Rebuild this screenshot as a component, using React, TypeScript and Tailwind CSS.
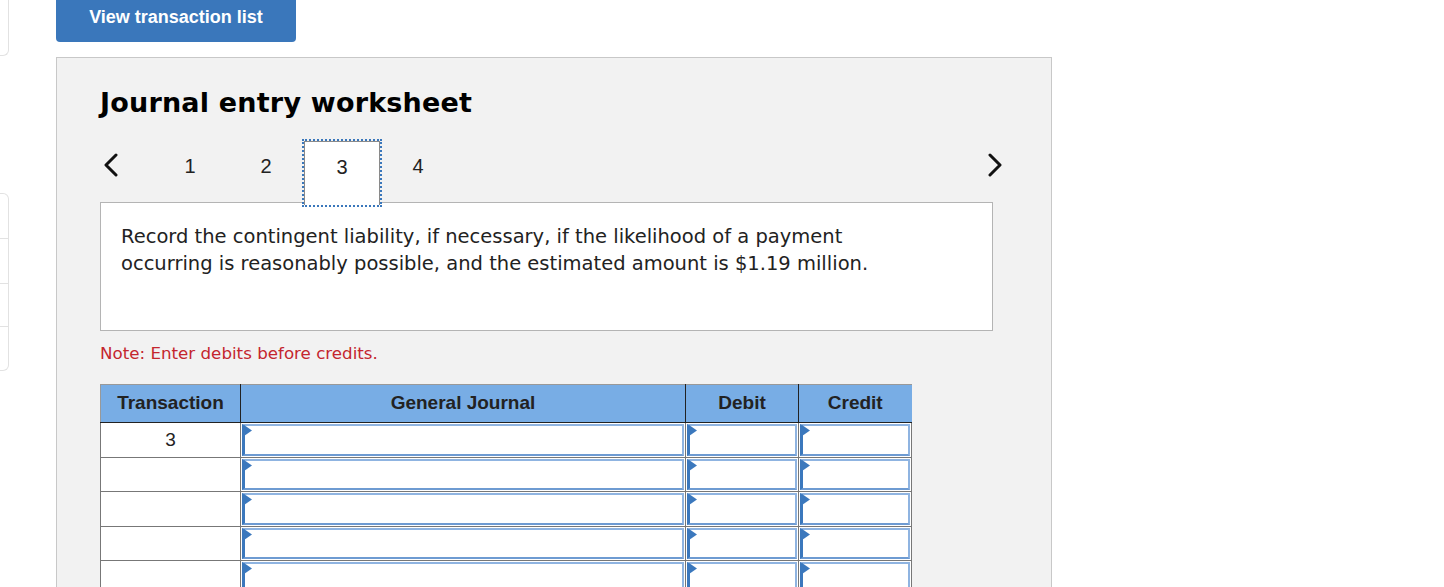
import React from "react";

const sans = { fontFamily: '"Liberation Sans", Arial, sans-serif' };
const verdana = { fontFamily: 'Verdana, "DejaVu Sans", sans-serif' };

function SideTabs() {
  return (
    <div className="w-[9px] shrink-0">
      <div className="h-[56px] border border-l-0 border-t-0 border-[#e2e2e2] rounded-br-[6px]" />
      <div className="mt-[137px] border border-l-0 border-[#e2e2e2] rounded-r-[6px]">
        <div className="h-[45px] border-b border-[#e2e2e2]" />
        <div className="h-[45px] border-b border-[#e2e2e2]" />
        <div className="h-[43px] border-b border-[#e2e2e2]" />
        <div className="h-[43px]" />
      </div>
    </div>
  );
}

function Chevron({ dir }: { dir: "left" | "right" }) {
  return (
    <svg width="16" height="24" viewBox="0 0 16 24" aria-hidden="true">
      <polyline
        points={dir === "left" ? "13,2 3,12 13,22" : "3,2 13,12 3,22"}
        fill="none"
        stroke="#111"
        strokeWidth="3"
        strokeLinecap="round"
        strokeLinejoin="round"
      />
    </svg>
  );
}

function InputCell() {
  return (
    <td className="relative h-[34.5px] bg-white p-0 border border-[#777]">
      <div className="absolute inset-[1px] border-2 border-l-[3px] border-[#8fb4e1] border-l-[#3b78bd] border-b-[#6e9bd2]" />
      <svg
        className="absolute left-[3px] top-[2px] block h-[11px] w-[8px]"
        viewBox="0 0 8 11"
        aria-hidden="true"
      >
        <polygon points="0,0 8,5.5 0,11" fill="#3b78bd" />
      </svg>
    </td>
  );
}

export default function App() {
  const rows = ["3", "", "", "", ""];
  return (
    <div className="flex min-h-[587px] bg-white text-[#222]">
      <SideTabs />
      <div className="ml-[47px] w-[996px]">
        <button
          className="flex h-[42px] w-[240px] items-start justify-center rounded-b-[4px] bg-[#3a77bb] pt-[4px] text-[18px] font-bold text-white"
          style={sans}
        >
          View transaction list
        </button>

        <section className="mt-[15px] border border-[#c8c8c8] bg-[#f2f2f2] pl-[43px] pt-[29px]">
          <h2 className="text-[27px] font-bold leading-[32px] tracking-[0.2px] text-black" style={verdana}>
            Journal entry worksheet
          </h2>

          <div className="relative z-10 mt-[22px] flex h-[64px] w-[903px] items-start" style={sans}>
            <div className="w-[52px] pl-[3px] pt-[12px]">
              <Chevron dir="left" />
            </div>
            {["1", "2", "3", "4"].map((n) => (
              <div key={n} className="flex h-[64px] w-[76px] justify-center">
                {n === "3" ? (
                  <div className="h-[64px] w-[77px] border border-[#8a8a8a] border-b-0 bg-white pt-[10px] text-center text-[20px] outline-2 outline-dotted outline-[#3a77bb]">
                    {n}
                  </div>
                ) : (
                  <div className="pt-[10px] text-[20px]">{n}</div>
                )}
              </div>
            ))}
            <div className="ml-auto pt-[12px]">
              <Chevron dir="right" />
            </div>
          </div>

          <div
            className="mt-[-3px] h-[129px] w-[893px] border border-[#b4b4b4] bg-white pl-[20px] pt-[20px] text-[19.5px] leading-[27px] text-[#222]"
            style={verdana}
          >
            Record the contingent liability, if necessary, if the likelihood of a payment
            <br />
            occurring is reasonably possible, and the estimated amount is $1.19 million.
          </div>

          <p className="mt-[12px] text-[16.7px] leading-[20px] text-[#c4262e]" style={verdana}>
            Note: Enter debits before credits.
          </p>

          <table
            className="mt-[21px] w-[811px] table-fixed border-collapse border-t border-l border-[#999]"
            style={sans}
          >
            <colgroup>
              <col className="w-[140px]" />
              <col className="w-[445px]" />
              <col className="w-[113px]" />
              <col className="w-[113px]" />
            </colgroup>
            <thead>
              <tr className="h-[38px] bg-[#78ade5] text-[19px] font-bold text-[#222]">
                <th className="border border-[#222] border-t-0 border-l-0 font-bold">Transaction</th>
                <th className="border border-[#222] border-t-0 font-bold">General Journal</th>
                <th className="border border-[#222] border-t-0 font-bold">Debit</th>
                <th className="border border-[#222] border-t-0 border-r-0 font-bold">Credit</th>
              </tr>
            </thead>
            <tbody>
              {rows.map((r, i) => (
                <tr key={i}>
                  <td className="h-[34.5px] border border-[#777] bg-white text-center align-middle text-[19px]">
                    {r}
                  </td>
                  <InputCell />
                  <InputCell />
                  <InputCell />
                </tr>
              ))}
            </tbody>
          </table>
        </section>
      </div>
    </div>
  );
}
